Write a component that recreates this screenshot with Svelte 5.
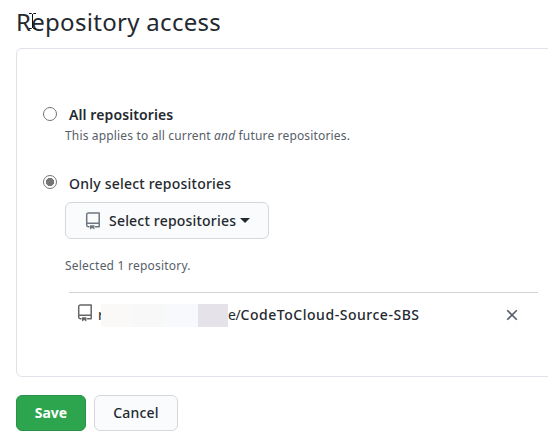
<script>
  let access = $state('selected');
</script>

{#snippet repoIcon()}
  <svg width="18" height="18" viewBox="0 0 18 18" aria-hidden="true">
    <path d="M5 14.7H4.3A1.6 1.6 0 0 1 2.7 13.1V2.7A1.7 1.7 0 0 1 4.4 1H15.2V14.7H11.5M2.8 11.3H15" fill="none" stroke="currentColor" stroke-width="1.5" stroke-linejoin="round" stroke-linecap="round" />
    <path d="M6 13.3h4.4v4.2l-2.2-1.5L6 17.5z" fill="currentColor" />
  </svg>
{/snippet}

<main>
  <h2>Repository access</h2>
  <svg class="cursor" width="9" height="16" viewBox="0 0 9 16" aria-hidden="true">
    <path d="M1 .5h2.5l1 1 1-1H8M4.5 1v14M1 15.5h2.5l1-1 1 1H8" fill="none" stroke="#111" />
  </svg>

  <section class="box">
    <label class="option">
      <input type="radio" name="access" value="all" bind:group={access} />
      <span class="all">All repositories</span>
    </label>
    <p class="note">This applies to all current <em>and</em> future repositories.</p>

    <label class="option second">
      <input type="radio" name="access" value="selected" bind:group={access} />
      <span class="only">Only select repositories</span>
    </label>
    <button class="btn select">
      {@render repoIcon()}
      <span class="select-text">Select repositories</span>
      <i class="caret"></i>
    </button>
    <p class="count">Selected 1 repository.</p>

    <div class="repo">
      {@render repoIcon()}
      <span class="initial">r</span>
      <span class="mask"><i></i><i></i><i></i><i></i></span>
      <span class="name"><span class="owner">e/</span>CodeToCloud-Source-SBS</span>
      <button class="remove" aria-label="Remove">
        <svg width="12" height="12" viewBox="0 0 12 12"><path d="M1.2 1.2l9.6 9.6M10.8 1.2l-9.6 9.6" stroke="#57606a" stroke-width="1.6" /></svg>
      </button>
    </div>
  </section>

  <div class="actions">
    <button class="btn save">Save</button>
    <button class="btn cancel">Cancel</button>
  </div>
</main>

<style>
  :global(body) { background: #fff; overflow: hidden; }
  main {
    position: relative;
    box-sizing: border-box;
    height: 441px;
    padding: 2px 0 0 16px;
    overflow: hidden;
    color: #24292f;
    font: 14px/20px "Noto Sans", "Open Sans", sans-serif;
    white-space: nowrap;
  }
  h2 { margin: 0; height: 46px; font-size: 24px; line-height: 40px; font-weight: 400; letter-spacing: .3px; }
  .cursor { position: absolute; left: 28px; top: 13px; }
  .box {
    box-sizing: border-box;
    width: 560px;
    height: 329px;
    padding: 56px 0 0 26px;
    border: 1px solid #dfe2e8;
    border-radius: 6px;
  }
  .option { display: flex; height: 20px; font-weight: 500; letter-spacing: .22px; }
  input {
    appearance: none;
    box-sizing: border-box;
    flex: none;
    width: 14px;
    height: 14px;
    margin: 2px 12px 0 0;
    border: 1px solid #757575;
    border-radius: 50%;
    background: #fff;
  }
  input:checked { background: radial-gradient(circle, #757575 3.8px, #fff 4.4px); }
  .second input { margin-top: 1px; }
  .all { font-weight: 600; letter-spacing: .1px; }
  p { margin: 0; padding-left: 22px; color: #57606a; font-size: 12px; line-height: 18px; }
  .note { padding-top: 2px; letter-spacing: .16px; }
  .second { margin-top: 29px; }
  .btn {
    display: flex;
    align-items: center;
    justify-content: center;
    box-sizing: border-box;
    height: 36px;
    margin: 0;
    padding: 0;
    border: 1px solid #d5d8da;
    border-radius: 6px;
    background: #fafbfc;
    color: #24292f;
    font: 500 14px/20px "Noto Sans", "Open Sans", sans-serif;
    letter-spacing: .2px;
  }
  .select { width: 204px; height: 37px; margin: 8px 0 0 22px; justify-content: flex-start; padding-left: 18px; }
  .select svg { color: #6e7781; margin-right: 7px; }
  .caret { border: 5px solid transparent; border-top-color: #24292f; border-bottom: 0; margin-left: 4px; }
  .count { padding-top: 18px; letter-spacing: .22px; }
  .repo {
    display: flex;
    align-items: center;
    width: 469px;
    height: 44px;
    margin: 17px 0 0 26px;
    border-top: 1px solid #d0d2d6;
  }
  .repo > svg { flex: none; color: #666; margin: -4px 4px 0 7px; }
  .initial { flex: none; width: 10px; }
  .mask { position: relative; flex: none; display: flex; height: 23px; width: 127px; margin-left: -7px; }
  .mask i { width: 32px; background: #faf9f8; }
  .mask i:nth-child(2) { width: 33px; background: #f8f8f8; }
  .mask i:nth-child(3) { background: #f7f9fc; }
  .mask i:nth-child(4) { width: 30px; background: #e5e3e9; }
  .name { flex: none; font-weight: 500; letter-spacing: .53px; width: 278px; }
  .owner { font-weight: 400; letter-spacing: -.3px; }
  .remove { display: flex; padding: 0; border: 0; background: none; }
  .actions { display: flex; gap: 8px; margin-top: 18px; }
  .save { width: 70px; background: #2da44e; border-color: #2a9147; color: #fff; font-weight: 700; letter-spacing: 0; }
  .cancel { width: 84px; }
</style>
